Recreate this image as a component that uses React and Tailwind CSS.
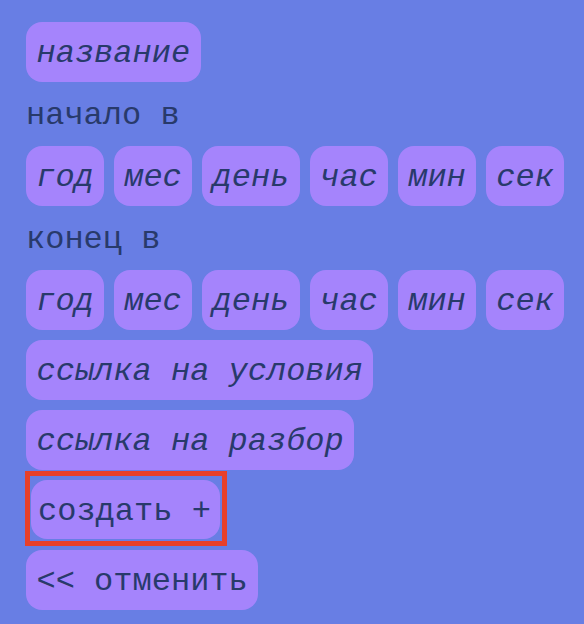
const chip = 'bg-[#a584fc] rounded-[16px] h-[60px] px-[10.5px] pt-[4px] leading-[56px] italic whitespace-pre';
const label = 'h-[44px] pt-[3px] leading-[41px] whitespace-pre';

const DateRow = () => (
  <div className="flex gap-[10px]">
    {['год', 'мес', 'день', 'час', 'мин', 'сек'].map((p) => (
      <span
        key={p}
        className={`bg-[#a584fc] rounded-[16px] h-[60px] pt-[4px] leading-[56px] italic text-center ${
          p.length === 4 ? 'w-[98px]' : 'w-[78px]'
        }`}
      >
        {p}
      </span>
    ))}
  </div>
);

export default function App() {
  return (
    <div
      className="min-h-screen w-[584px] h-[624px] bg-[#687ee4] text-[#283a6b] text-[32px] pl-[26px] pt-[22px] flex flex-col items-start gap-[10px]"
      style={{ fontFamily: '"Liberation Mono", monospace' }}
    >
      <span className={chip}>название</span>
      <div className={label}>начало в</div>
      <DateRow />
      <div className={label}>конец в</div>
      <DateRow />
      <span className={chip}>ссылка на условия</span>
      <span className={chip}>ссылка на разбор</span>
      <div className="relative h-[60px]">
        <button className="ml-[5px] h-[59px] w-[189px] pl-[7px] pr-[9px] pt-[4px] text-left bg-[#a584fc] rounded-[16px] leading-[55px] whitespace-pre">
          создать +
        </button>
        <div className="absolute left-[-1px] top-[-9px] w-[202px] h-[75px] border-[5px] border-[#e8402a] pointer-events-none" />
      </div>
      <button className="h-[60px] px-[10.5px] pt-[4px] bg-[#a584fc] rounded-[16px] leading-[56px] whitespace-pre">
        {'<< отменить'}
      </button>
    </div>
  );
}
